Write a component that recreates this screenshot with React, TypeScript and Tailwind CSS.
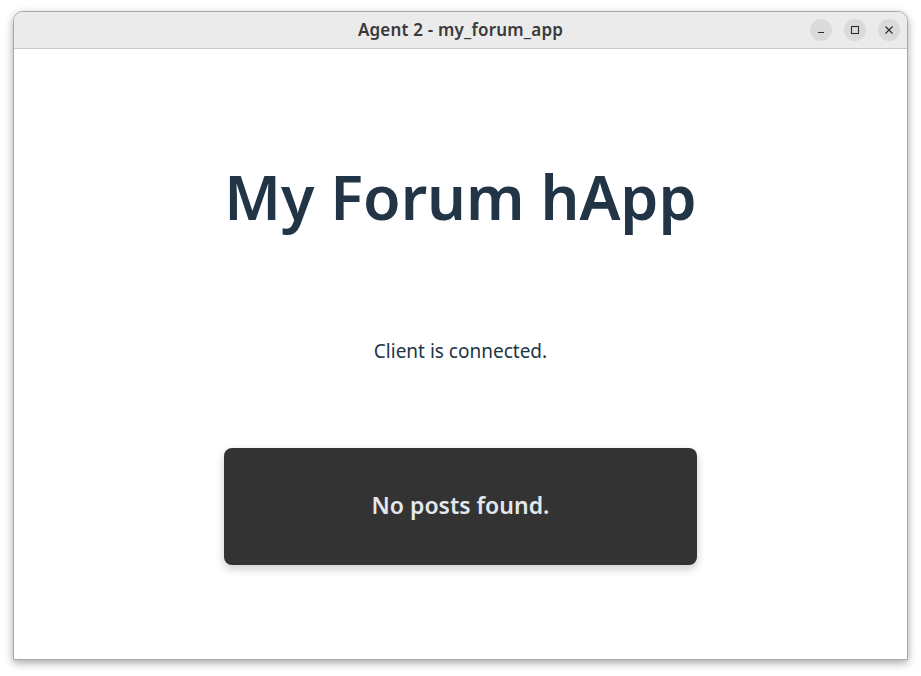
import React from 'react';

const font = { fontFamily: '"Noto Sans", "Open Sans", sans-serif' };

const TitleButton = ({ children }: { children: React.ReactNode }) => (
  <div className="flex h-[22px] w-[22px] items-center justify-center rounded-full bg-[#dadada] text-[#2e2e2e]">
    {children}
  </div>
);

const App = () => {
  return (
    <div className="h-[676px] w-[921px] bg-white pl-[13px] pt-[11px]" style={font}>
      <div className="flex h-[649px] w-[895px] flex-col overflow-hidden rounded-t-[10px] border border-[#a8a8a8] bg-white shadow-[0_3px_8px_rgba(0,0,0,0.35)]">
        <div className="relative flex h-[37px] shrink-0 items-center justify-center border-b border-[#c9c9c9] bg-[#ebebeb]">
          <span className="text-[17px] font-semibold tracking-[0.2px] text-[#3a3a3a]">Agent 2 - my_forum_app</span>
          <div className="absolute right-[7px] top-[7px] flex gap-[12px]">
            <TitleButton>
              <svg width="10" height="10" viewBox="0 0 10 10">
                <path d="M2 7.5h6" stroke="currentColor" strokeWidth="1.2" />
              </svg>
            </TitleButton>
            <TitleButton>
              <svg width="10" height="10" viewBox="0 0 10 10">
                <rect x="1.5" y="1.5" width="7" height="7" fill="none" stroke="currentColor" strokeWidth="1.1" />
              </svg>
            </TitleButton>
            <TitleButton>
              <svg width="10" height="10" viewBox="0 0 10 10">
                <path d="M1.5 1.5l7 7M8.5 1.5l-7 7" stroke="currentColor" strokeWidth="1.2" />
              </svg>
            </TitleButton>
          </div>
        </div>

        <main className="flex flex-1 flex-col items-center">
          <h1 className="mt-[113px] text-[61px] font-semibold leading-[70px] text-[#213547]">My Forum hApp</h1>
          <p className="mt-[106px] text-[19px] leading-[27px] text-[#213547]">Client is connected.</p>
          <div className="mt-[83px] flex h-[117px] w-[473px] items-center justify-center rounded-[8px] bg-[#333333] shadow-[0_4px_10px_rgba(0,0,0,0.2)]">
            <span className="-mt-[2px] text-[23px] font-semibold text-[#e3e8ef]">No posts found.</span>
          </div>
        </main>
      </div>
    </div>
  );
};

export default App;
